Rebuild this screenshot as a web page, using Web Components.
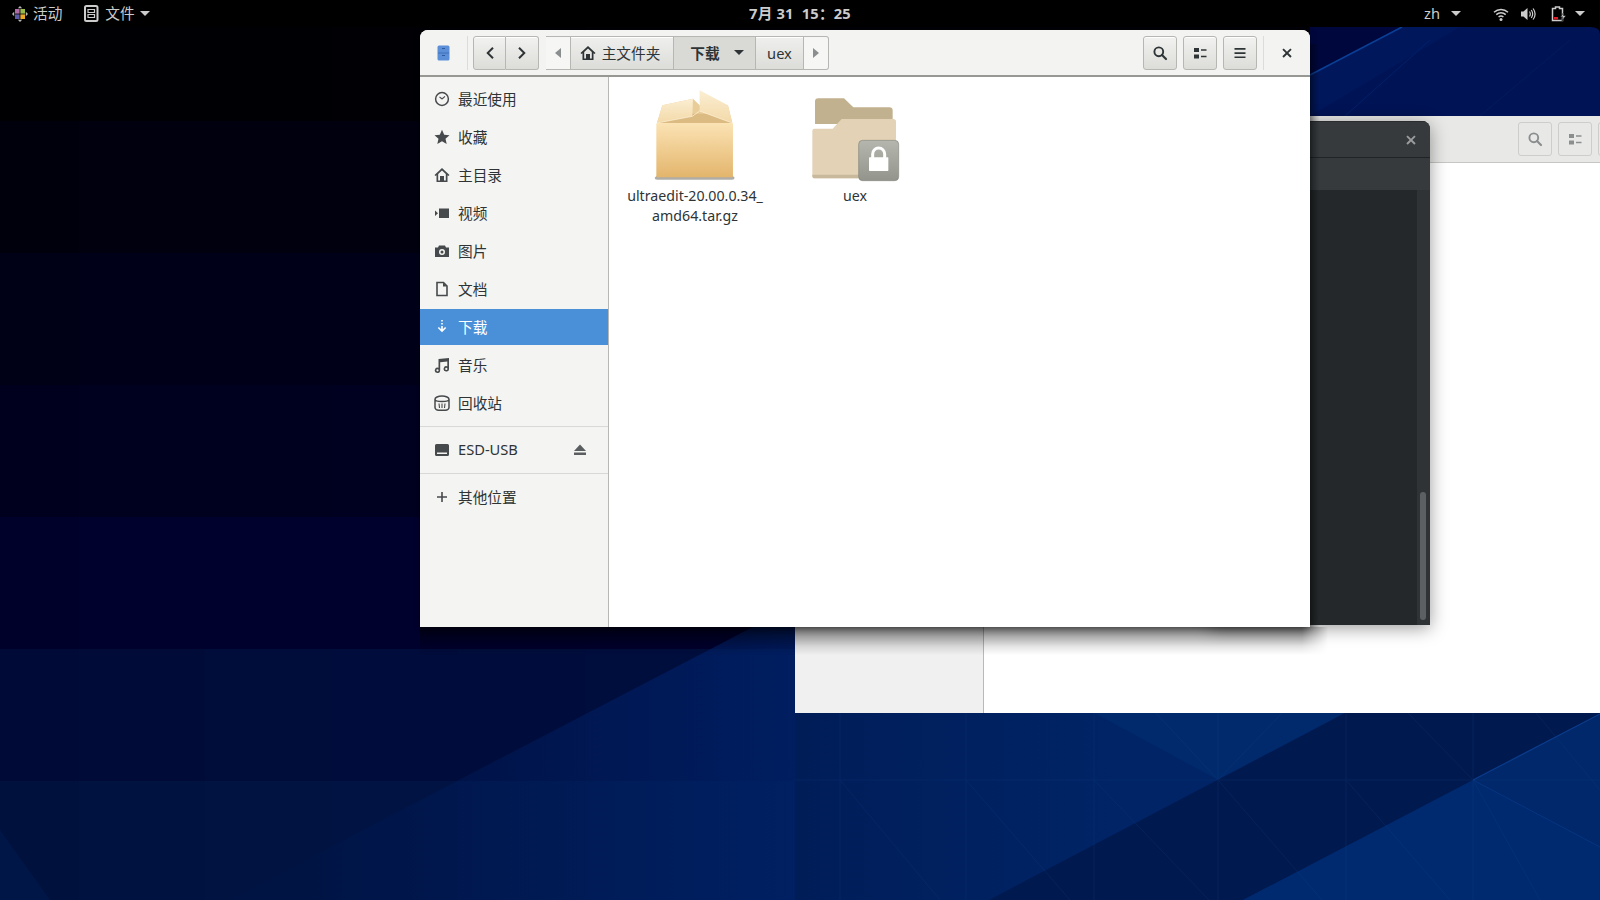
<!DOCTYPE html>
<html lang="zh">
  <head>
    <meta charset="UTF-8" />
    <title>Files</title>
    <style>
      html, body { margin: 0; padding: 0; background: #000; overflow: hidden; }
      body { font-family: "Noto Sans", "Noto Sans CJK SC", sans-serif; }
    </style>
  </head>
  <body>
    <gnome-desktop>
      <desk-wallpaper></desk-wallpaper>
      <back-window></back-window>
      <dark-window></dark-window>
      <files-window></files-window>
      <top-bar></top-bar>
    </gnome-desktop>

    <script>
      const FONT = `"Noto Sans", "Noto Sans CJK SC", sans-serif`;
      const svg16 = (body, color = "currentColor", size = 16) =>
        `<svg width="${size}" height="${size}" viewBox="0 0 16 16" fill="${color}" xmlns="http://www.w3.org/2000/svg">${body}</svg>`;

      const icons = {
        recent: `<circle cx="8" cy="8" r="6.4" fill="none" stroke="currentColor" stroke-width="1.5"/><path d="M8 8 5.5 5.8M8 8l3-2.6" fill="none" stroke="currentColor" stroke-width="1.1"/>`,
        star: `<path d="M8 .8l2.2 4.9 5.3.5-4 3.5 1.2 5.2L8 12.2l-4.7 2.7 1.2-5.2-4-3.5 5.3-.5z"/>`,
        home: `<path fill-rule="evenodd" d="M8 1 .5 8l1 1.1L2.5 8.2V15h11V8.2l1 .9 1-1.1zM8 3.4l3.8 3.5V13.400H10V9H6v4.400H4.200V6.900z"/>`,
        video: `<path d="M5 3.500h10v9.500H5zM1 5.500 4 8.200 1 11z"/>`,
        camera: `<path fill-rule="evenodd" d="M5 2.500h6l1 2h3V14H1V4.500h3zM8 6a3 3 0 1 0 0 6 3 3 0 0 0 0-6zm0 1.500a1.500 1.500 0 1 1 0 3 1.500 1.500 0 0 1 0-3z"/>`,
        doc: `<path fill="none" stroke="currentColor" stroke-width="1.6" d="M3 1.500h6.500L13 5v9.500H3z"/><path d="M9 1.500 13 5.500H9z"/>`,
        download: `<path d="M7.200 1h1.600v1.600H7.200zM7.200 4h1.600v1.600H7.200zM7.200 7h1.600v3.200l2.300-2.200 1.100 1.100L8 13.300 3.800 9.100 4.900 8l2.300 2.200z"/>`,
        music: `<path fill-rule="evenodd" d="M4.500 2 15 1v10.800a2.700 2.700 0 1 1-1.700-2.500V4.600L6.200 5.300v8a2.700 2.700 0 1 1-1.700-2.500zM3.500 12.200a1.100 1.100 0 1 0 0 2.200 1.100 1.100 0 0 0 0-2.200zm8.800-1.400a1.100 1.100 0 1 0 0 2.200 1.100 1.100 0 0 0 0-2.200z"/>`,
        trash: `<path fill="none" stroke="currentColor" stroke-width="1.500" d="M1 4.300C1 2.500 4 1 8 1s7 1.500 7 3.300M1 4.300v8.200c0 1.500 1.700 2.700 3.500 2.700h7c1.800 0 3.500-1.200 3.500-2.700V4.300M1 4.300c0 1.300 3 2.300 7 2.300s7-1 7-2.300"/><path fill="none" stroke="currentColor" stroke-width="1.100" d="M5 8.500l.5 4.500M8 8.500V13M11 8.500l-.5 4.500"/>`,
        drive: `<path fill-rule="evenodd" d="M2.500 2h11A1.500 1.500 0 0 1 15 3.500v9a1.500 1.500 0 0 1-1.500 1.500h-11A1.500 1.500 0 0 1 1 12.500v-9A1.500 1.500 0 0 1 2.500 2zM3 10.500V12h10v-1.500z"/>`,
        plus: `<path d="M7.200 3h1.600v4.200H13v1.600H8.800V13H7.200V8.800H3V7.200h4.200z"/>`,
        eject: `<path d="M8 2.500 14 9H2zM2 10.500h12V13H2z"/>`,
        search: `<circle cx="6.800" cy="6.800" r="4.400" fill="none" stroke="currentColor" stroke-width="1.900"/><path d="M10 10l4 4" stroke="currentColor" stroke-width="2.200" stroke-linecap="round"/>`,
        list: `<path d="M2 3h5v4H2zM2 9.500h5v4H2zM9 4.200h5.500v1.500H9zM9 10.800h5.500v1.500H9z"/>`,
        menu: `<path d="M2.500 3h11v1.700h-11zM2.500 7.200h11v1.700h-11zM2.500 11.400h11v1.700h-11z"/>`,
        close: `<path d="M3.600 1.900 8 6.300l4.400-4.400 1.800 1.800L9.800 8.100l4.400 4.300-1.800 1.800L8 9.900l-4.400 4.300-1.800-1.800 4.400-4.300-4.400-4.400z"/>`,
        prev: `<path d="M10.300 2 11.700 3.400 7.100 8l4.600 4.600-1.400 1.400-6-6z"/>`,
        next: `<path d="M5.700 2 4.300 3.400 8.900 8l-4.600 4.600L5.700 14l6-6z"/>`,
      };

      class DeskWallpaper extends HTMLElement {
        constructor() {
          super();
          this.attachShadow({ mode: "open" });
          const xs = [0, 79, 205, 332, 458, 585, 711, 838, 964, 1600];
          const ys = [0, 121, 253, 385, 517, 649, 781, 900];
          const rows = [[0, 0, 3], [0, 0, 13], [0, 0, 23], [0, 0, 30], [0, 1, 43], [0, 10, 54], [0, 17, 62]];
          let tiles = "";
          rows.forEach((c, r) => {
            for (let i = 0; i < xs.length - 1; i++) {
              const g = c[1] + (r >= 5 ? i * 0.8 : 0);
              const b = c[2] + (r >= 5 ? i * 1.5 : i * 0.5);
              tiles += `<rect x="${xs[i]}" y="${ys[r]}" width="${xs[i + 1] - xs[i]}" height="${ys[r + 1] - ys[r]}" fill="rgb(0,${Math.round(g)},${Math.round(b)})"/>`;
            }
          });
          const faint = [
            [1156, 713, 1218, 780], [1282, 713, 1218, 780], [1408, 713, 1473, 780], [1536, 713, 1600, 790],
            [1218, 780, 1322, 900], [1346, 780, 1450, 900], [1473, 780, 1540, 900], [840, 780, 940, 900],
            [966, 780, 1070, 900], [1094, 780, 1209, 900], [795, 780, 1600, 780], [840, 713, 840, 900],
            [966, 713, 966, 900], [1094, 713, 1094, 900], [1218, 713, 1218, 900], [1346, 713, 1346, 900],
            [1473, 713, 1473, 900],
          ].map((l) => `<line x1="${l[0]}" y1="${l[1]}" x2="${l[2]}" y2="${l[3]}"/>`).join("");
          this.shadowRoot.innerHTML = `
            <style>
              :host { position: absolute; inset: 0; display: block; }
              svg { display: block; }
            </style>
            <svg width="1600" height="900" xmlns="http://www.w3.org/2000/svg" shape-rendering="geometricPrecision">
              <defs>
                <linearGradient id="low" x1="0" x2="1" y1="0" y2="0">
                  <stop offset="0" stop-color="#001d58"/><stop offset="0.4" stop-color="#002466"/><stop offset="1" stop-color="#002466"/>
                </linearGradient>
                <linearGradient id="wedge" gradientUnits="userSpaceOnUse" x1="300" x2="795" y1="0" y2="0">
                  <stop offset="0" stop-color="#00246e" stop-opacity="0.05"/><stop offset="1" stop-color="#00246e" stop-opacity="0.7"/>
                </linearGradient>
              </defs>
              ${tiles}
              <polygon points="229,900 459,780 795,605 795,900" fill="url(#wedge)"/>
              <polygon points="0,830 0,900 50,900" fill="#001c50" opacity="0.5"/>
              <rect x="795" y="713" width="805" height="187" fill="url(#low)"/>
              <polygon points="1094,713 1218,780 1345,713" fill="#002a6c"/>
              <polygon points="989,900 1345,713 1600,713 1600,715 1243,900" fill="#001a50"/>
              <polygon points="1243,900 1473,780 1600,847 1600,900" fill="#002a70"/>
              <polygon points="1473,780 1600,715 1600,847" fill="#00286a"/>
              <g stroke="#2a5a9c" stroke-width="1" opacity="0.12">${faint}</g>
              <line x1="1473" y1="780" x2="1600" y2="714" stroke="#0a3c8c" stroke-width="1.200"/>
              <line x1="1473" y1="780" x2="1600" y2="847" stroke="#0a3c8c" stroke-width="1" opacity="0.7"/>
              <!-- strip above the back window -->
              <rect x="1310" y="27" width="290" height="90" fill="#001354"/>
              <polygon points="1310,27 1402,27 1310,75" fill="#00073c"/>
              <polygon points="1310,75 1402,27 1460,27 1310,116" fill="#001a62" opacity="0.6"/>
              <line x1="1310" y1="75" x2="1402" y2="27" stroke="#0a3f96" stroke-width="1.500"/>
              <line x1="1345" y1="116" x2="1430" y2="40" stroke="#00206a" stroke-width="1"/>
              <line x1="1480" y1="116" x2="1570" y2="40" stroke="#001c5e" stroke-width="1"/>
              <path d="M1590 27h10v7q0-7-10-7z" fill="#000"/>
            </svg>
          `;
        }
      }
      customElements.define("desk-wallpaper", DeskWallpaper);

      class GnomeDesktop extends HTMLElement {
        constructor() {
          super();
          this.attachShadow({ mode: "open" });
          this.shadowRoot.innerHTML = `
            <style>
              :host { display: block; position: relative; width: 1600px; height: 900px; overflow: hidden; font-family: ${FONT}; }
            </style>
            <slot></slot>
          `;
        }
      }
      customElements.define("gnome-desktop", GnomeDesktop);

      class TopBar extends HTMLElement {
        constructor() {
          super();
          this.attachShadow({ mode: "open" });
          const arrow = `<svg width="10" height="5" viewBox="0 0 10 5"><path d="M0 0h10L5 5z" fill="#ccc"/></svg>`;
          this.shadowRoot.innerHTML = `
            <style>
              :host {
                position: absolute; left: 0; top: 0; right: 0; height: 27px;
                display: grid; grid-template-columns: 1fr auto 1fr; align-items: center;
                background: #000; color: #ccc; font-size: 14.67px; line-height: 27px;
              }
              .left, .right { display: flex; align-items: center; }
              .right { justify-content: flex-end; }
              .clock { font-weight: 700; font-size: 14.67px; white-space: pre; letter-spacing: .2px; }
              svg { display: block; flex: none; }
            </style>
            <div class="left">
              <svg style="margin-left:12px" width="16" height="16" viewBox="0 0 16 16">
                <path d="M8 0l2.200 2.200H5.800zM8 16l-2.200-2.200h4.400zM0 8l2.200-2.200v4.400zM16 8l-2.200 2.200V5.800z" fill="#b9b9b9"/>
                <rect x="3" y="3" width="4.600" height="4.600" fill="#b06ca8"/>
                <rect x="8.400" y="3" width="4.600" height="4.600" fill="#9aba4a"/>
                <rect x="8.400" y="8.400" width="4.600" height="4.600" fill="#e8a828"/>
                <rect x="3" y="8.400" width="4.600" height="4.600" fill="#5a5aa8"/>
              </svg>
              <span style="margin-left:5px">活动</span>
              <svg style="margin-left:22px" width="15" height="17" viewBox="0 0 15 17">
                <rect x="1" y="1" width="12.500" height="15" rx="1.500" fill="none" stroke="#ccc" stroke-width="2"/>
                <path d="M4 4.500h6.500v3H4zM4 9.500h6.500v3H4z" fill="none" stroke="#ccc" stroke-width="1.200"/>
              </svg>
              <span style="margin-left:6px">文件</span>
              <span style="margin-left:5px">${arrow}</span>
            </div>
            <div class="clock">7月 31  15：25</div>
            <div class="right">
              <span>zh</span>
              <span style="margin-left:11px">${arrow}</span>
              <svg style="margin-left:32px" width="16" height="16" viewBox="0 0 16 16" fill="none" stroke="#ccc">
                <path d="M1 6.200c4-3.600 10-3.600 14 0" stroke-width="1.500"/>
                <path d="M3.300 8.600c2.700-2.400 6.700-2.400 9.400 0" stroke-width="1.500"/>
                <path d="M5.600 11c1.400-1.200 3.400-1.200 4.800 0" stroke-width="1.500"/>
                <circle cx="8" cy="13.500" r="1.500" fill="#ccc" stroke="none"/>
              </svg>
              <svg style="margin-left:11px" width="16" height="16" viewBox="0 0 16 16" fill="none" stroke="#ccc">
                <path d="M1 5.500h2.500L7.500 2v12l-4-3.500H1z" fill="#ccc" stroke="none"/>
                <path d="M9.500 5.500c1 1.500 1 3.500 0 5M11.300 4c1.700 2.500 1.700 5.500 0 8M13.100 2.500c2.400 3.300 2.400 7.700 0 11" stroke-width="1.200"/>
              </svg>
              <svg style="margin-left:15px" width="17" height="17" viewBox="0 0 17 17" fill="none">
                <path d="M1.500 3h3V1.500h4V3h3v12h-10z" stroke="#ccc" stroke-width="1.500" transform="translate(0 .5)"/>
                <rect x="3" y="12" width="4" height="2.500" fill="#e01b24"/>
                <path d="M13 7l-3.500 5h2.500l-1 4 4-5.500h-2.500z" fill="#ccc" stroke="#000" stroke-width=".6"/>
              </svg>
              <span style="margin:0 15px 0 7px">${arrow}</span>
            </div>
          `;
        }
      }
      customElements.define("top-bar", TopBar);

      class HdrBtn extends HTMLElement {
        constructor() {
          super();
          this.attachShadow({ mode: "open" });
          this.shadowRoot.innerHTML = `
            <style>
              :host {
                display: flex; align-items: center; justify-content: center; flex: none; box-sizing: border-box;
                width: 34px; height: 34px; border: 1px solid #b6b6b3; border-radius: 3px; color: #2e3436;
                background: linear-gradient(#f2f2f0, #dcdcd9); box-shadow: inset 0 1px 0 #fff;
              }
              :host([dim]) { background: #e8e8e7; border-color: #cdcdcb; color: #8b8e8f; box-shadow: none; }
              :host([flat]) { width: 33px; border-radius: 0; }
              :host([first]) { border-radius: 3px 0 0 3px; }
              :host([last]) { border-radius: 0 3px 3px 0; border-left: none; }
              svg { display: block; }
            </style>
            <span id="i"></span>
          `;
        }
        connectedCallback() {
          this.shadowRoot.getElementById("i").innerHTML = svg16(icons[this.getAttribute("icon")]);
        }
      }
      customElements.define("hdr-btn", HdrBtn);

      class PathSeg extends HTMLElement {
        constructor() {
          super();
          this.attachShadow({ mode: "open" });
          this.shadowRoot.innerHTML = `
            <style>
              :host {
                display: flex; align-items: center; justify-content: center; box-sizing: border-box; height: 34px;
                border: 1px solid #b6b6b3; border-left: none; color: #2e3436; font-size: 14.67px; white-space: nowrap;
                background: linear-gradient(#efefed, #dcdcd9); box-shadow: inset 0 1px 0 #fff;
              }
              :host([arrow]) { background: #f6f6f5; box-shadow: none; }
              :host([active]) { background: #d9d9d6; box-shadow: none; font-weight: 700; }
            </style>
            <slot></slot>
          `;
        }
      }
      customElements.define("path-seg", PathSeg);

      class PathBar extends HTMLElement {
        constructor() {
          super();
          this.attachShadow({ mode: "open" });
          this.shadowRoot.innerHTML = `
            <style>
              :host { display: flex; flex: none; margin-left: 7px; font-family: ${FONT}; }
              path-seg:first-child { border-left: 1px solid #b6b6b3; border-radius: 3px 0 0 3px; }
              path-seg:last-child { border-radius: 0 3px 3px 0; }
              svg { display: block; }
            </style>
            <path-seg arrow style="width:25px">
              <svg width="8" height="12" viewBox="0 0 8 12"><path d="M7 1v10L1 6z" fill="#8b8e8f"/></svg>
            </path-seg>
            <path-seg style="width:103px;padding-right:4px">
              <span style="display:flex;margin-right:6px">${svg16(icons.home)}</span>主文件夹
            </path-seg>
            <path-seg active style="width:82px;padding-left:5px">
              下载
              <svg style="margin-left:14px" width="10" height="5" viewBox="0 0 10 5"><path d="M0 0h10L5 5z" fill="#2e3436"/></svg>
            </path-seg>
            <path-seg style="width:48px">uex</path-seg>
            <path-seg arrow style="width:25px">
              <svg width="8" height="12" viewBox="0 0 8 12"><path d="M1 1v10l6-5z" fill="#8b8e8f"/></svg>
            </path-seg>
          `;
        }
      }
      customElements.define("path-bar", PathBar);

      class SideRow extends HTMLElement {
        constructor() {
          super();
          this.attachShadow({ mode: "open" });
          this.shadowRoot.innerHTML = `
            <style>
              :host {
                display: flex; align-items: center; height: 38px; box-sizing: border-box; padding-left: 14px;
                font-size: 14.67px; color: #2e3436; flex: none;
              }
              .ic { width: 16px; height: 16px; color: #474a4c; margin-right: 8px; display: block; flex: none; }
              .t { padding-bottom: 2px; }
              :host([selected]) { background: #4a90d9; color: #fff; height: 36px; margin: 1px 0; }
              :host([selected]) .ic { color: #fff; }
              .tail { margin-left: auto; margin-right: 20px; color: #5a5e60; display: flex; }
              svg { display: block; }
            </style>
            <span class="ic"></span><span class="t"><slot></slot></span><span class="tail"></span>
          `;
        }
        connectedCallback() {
          this.shadowRoot.querySelector(".ic").innerHTML = svg16(icons[this.getAttribute("icon")]);
          const tail = this.getAttribute("tail");
          if (tail) this.shadowRoot.querySelector(".tail").innerHTML = svg16(icons[tail]);
        }
      }
      customElements.define("side-row", SideRow);

      class FileItem extends HTMLElement {
        constructor() {
          super();
          this.attachShadow({ mode: "open" });
          this.shadowRoot.innerHTML = `
            <style>
              :host { display: flex; flex-direction: column; align-items: center; width: 160px; flex: none; }
              .pic { height: 96px; display: flex; align-items: flex-end; justify-content: center; }
              .name { font-size: 14.2px; line-height: 20px; color: #2e3436; text-align: center; margin-top: 4px; }
            </style>
            <div class="pic"><slot name="icon"></slot></div>
            <div class="name"><slot></slot></div>
          `;
        }
      }
      customElements.define("file-item", FileItem);

      class BackWindow extends HTMLElement {
        constructor() {
          super();
          this.attachShadow({ mode: "open" });
          this.shadowRoot.innerHTML = `
            <style>
              :host { position: absolute; left: 795px; top: 116px; width: 805px; height: 597px; display: flex; flex-direction: column; background: #fff; overflow: hidden; }
              header {
                height: 47px; box-sizing: border-box; flex: none; background: #e8e8e7; border-bottom: 1px solid #c6c6c4;
                display: flex; justify-content: flex-end; align-items: flex-start; gap: 6px; padding-top: 6px; margin-right: -32px;
              }
              main { flex: 1; display: flex; }
              aside { width: 188px; flex: none; background: #f0f0f0; border-right: 1px solid #b9b9b7; }
            </style>
            <header>
              <hdr-btn dim icon="search"></hdr-btn>
              <hdr-btn dim icon="list"></hdr-btn>
              <hdr-btn dim icon="menu"></hdr-btn>
            </header>
            <main><aside></aside></main>
          `;
        }
      }
      customElements.define("back-window", BackWindow);

      class DarkWindow extends HTMLElement {
        constructor() {
          super();
          this.attachShadow({ mode: "open" });
          this.shadowRoot.innerHTML = `
            <style>
              :host {
                position: absolute; left: 1210px; top: 121px; width: 220px; height: 504px; display: flex; flex-direction: column;
                background: #24282a; border-radius: 8px 8px 0 0; box-shadow: 0 3px 18px rgba(0,0,0,.4); overflow: hidden;
              }
              .title { height: 37px; box-sizing: border-box; flex: none; background: #363a3c; border-top: 1px solid #2a2d2f; border-bottom: 1px solid #212426; display: flex; justify-content: flex-end; align-items: center; padding-right: 13px; color: #9a9c9d; }
              .tools { height: 32px; flex: none; background: #363a3c; }
              .list { flex: 1; display: flex; justify-content: flex-end; }
              .track { width: 13px; background: #2f3335; position: relative; }
              .thumb { position: absolute; left: 3px; top: 302px; width: 6px; height: 128px; border-radius: 3px; background: #5c6062; }
              svg { display: block; }
            </style>
            <div class="title">${svg16(icons.close, "currentColor", 12)}</div>
            <div class="tools"></div>
            <div class="list"><div class="track"><div class="thumb"></div></div></div>
          `;
        }
      }
      customElements.define("dark-window", DarkWindow);

      class FilesWindow extends HTMLElement {
        constructor() {
          super();
          this.attachShadow({ mode: "open" });
          this.shadowRoot.innerHTML = `
            <style>
              :host {
                position: absolute; left: 420px; top: 30px; width: 890px; height: 597px; display: flex; flex-direction: column;
                background: #fff; border-radius: 8px 8px 0 0; box-shadow: 0 0 6px rgba(0,0,0,.35);
                font-family: ${FONT};
              }
              /* soft shadow lying on the windows below */
              .drop-b { position: absolute; left: 0; right: -18px; top: 100%; height: 28px; pointer-events: none;
                background: linear-gradient(rgba(0,0,0,.62), rgba(0,0,0,.32) 35%, rgba(0,0,0,.1) 70%, transparent);
                -webkit-mask-image: linear-gradient(90deg, #000 calc(100% - 26px), transparent);
                mask-image: linear-gradient(90deg, #000 calc(100% - 26px), transparent); }
              .drop-r { position: absolute; top: 14px; bottom: 0; left: 100%; width: 10px; pointer-events: none;
                background: linear-gradient(90deg, rgba(0,0,0,.35), transparent); }
              header {
                height: 47px; box-sizing: border-box; flex: none; display: flex; align-items: center;
                background: #f3f3f2; border-bottom: 2px solid #979794; border-radius: 8px 8px 0 0;
              }
              .app { width: 47px; flex: none; display: flex; justify-content: center; }
              .sep { width: 1px; height: 34px; background: #dcdcda; flex: none; }
              .nav { display: flex; margin-left: 5px; flex: none; }
              .grow { flex: 1; }
              .tools { display: flex; gap: 6px; flex: none; }
              .close { width: 46px; flex: none; display: flex; justify-content: center; color: #2e3436; }
              main { flex: 1; display: flex; min-height: 0; }
              aside { width: 189px; box-sizing: border-box; flex: none; background: #f4f4f2; border-right: 1px solid #b8b8b6; padding-top: 3px; display: flex; flex-direction: column; }
              hr { border: none; border-top: 1px solid #d8d8d6; margin: 4px 0; flex: none; }
              .files { flex: 1; display: flex; align-items: flex-start; padding: 9px 0 0 6px; background: #fff; }
              svg { display: block; }
            </style>
            <div class="drop-b"></div>
            <div class="drop-r"></div>
            <header>
              <div class="app">
                <svg width="13" height="16" viewBox="0 0 13 16">
                  <rect x="0.500" y="0.500" width="12" height="15" rx="1.500" fill="#5b8fd8"/>
                  <path d="M1 8h11" stroke="#3f70b8" stroke-width="1"/>
                  <path d="M5 3.500h3M5 10.500h3" stroke="#2f5a9e" stroke-width="1"/>
                </svg>
              </div>
              <div class="sep"></div>
              <div class="nav">
                <hdr-btn first flat icon="prev"></hdr-btn>
                <hdr-btn last flat icon="next"></hdr-btn>
              </div>
              <path-bar></path-bar>
              <div class="grow"></div>
              <div class="tools">
                <hdr-btn icon="search"></hdr-btn>
                <hdr-btn icon="list"></hdr-btn>
                <hdr-btn icon="menu"></hdr-btn>
              </div>
              <div class="sep" style="margin-left:6px"></div>
              <div class="close">${svg16(icons.close, "currentColor", 12)}</div>
            </header>
            <main>
              <aside>
                <side-row icon="recent">最近使用</side-row>
                <side-row icon="star">收藏</side-row>
                <side-row icon="home">主目录</side-row>
                <side-row icon="video">视频</side-row>
                <side-row icon="camera">图片</side-row>
                <side-row icon="doc">文档</side-row>
                <side-row icon="download" selected>下载</side-row>
                <side-row icon="music">音乐</side-row>
                <side-row icon="trash">回收站</side-row>
                <hr />
                <side-row icon="drive" tail="eject">ESD-USB</side-row>
                <hr />
                <side-row icon="plus">其他位置</side-row>
              </aside>
              <section class="files">
                <file-item>
                  <svg slot="icon" width="83.300" height="95" viewBox="100 20 250 285">
                    <defs>
                      <linearGradient id="bx" x1="0" x2="0" y1="0" y2="1"><stop offset="0" stop-color="#fbe3b4"/><stop offset="1" stop-color="#e3b56c"/></linearGradient>
                      <linearGradient id="fl" x1="0" x2="0" y1="0" y2="1"><stop offset="0" stop-color="#fbeed2"/><stop offset="1" stop-color="#f3d9a8"/></linearGradient>
                    </defs>
                    <path d="M105 292q0 6 8 6h224q8 0 8-6l-6-6H111z" fill="#8f8a80" opacity=".7"/>
                    <path d="M128 75 220 55l20 20 85 0 13 53H112z" fill="#e9cd99"/>
                    <path d="M150 100h170l18 28H112z" fill="#dcbb82"/>
                    <rect x="110" y="128" width="230" height="163" rx="3" fill="url(#bx)"/>
                    <path d="M112 128 128 75 220 55 218 108z" fill="url(#fl)"/>
                    <path d="M240 30 325 75 338 128 240 92z" fill="url(#fl)"/>
                    <path d="M112 128 218 108 240 92 338 128" fill="none" stroke="#fff3dc" stroke-width="2"/>
                  </svg>
                  ultraedit-20.00.0.34_<br />amd64.tar.gz
                </file-item>
                <file-item>
                  <svg slot="icon" width="90" height="87" viewBox="570 45 270 261">
                    <defs>
                      <linearGradient id="lk" x1="0" x2="0" y1="0" y2="1"><stop offset="0" stop-color="#b5b7ae"/><stop offset="1" stop-color="#93958d"/></linearGradient>
                    </defs>
                    <path d="M585 65q0-10 10-10h77l28 27h108q10 0 10 10v40H585z" fill="#c2b18f"/>
                    <path d="M577 152q0-6 6-6h55l27-29h155q8 0 8 8v162q0 8-8 8H585q-8 0-8-8z" fill="#e3d2b6"/>
                    <path d="M577 287q0 8 8 8h235q8 0 8-8v-3H577z" fill="#c8b89c"/>
                    <rect x="716" y="181" width="120" height="121" rx="12" fill="url(#lk)" stroke="#85877f" stroke-width="2"/>
                    <rect x="747" y="232" width="58" height="41" rx="2" fill="#fff"/>
                    <path d="M758 234v-12a18 18 0 0 1 36 0v12" fill="none" stroke="#fff" stroke-width="9"/>
                  </svg>
                  uex
                </file-item>
              </section>
            </main>
          `;
        }
      }
      customElements.define("files-window", FilesWindow);
    </script>
  </body>
</html>
